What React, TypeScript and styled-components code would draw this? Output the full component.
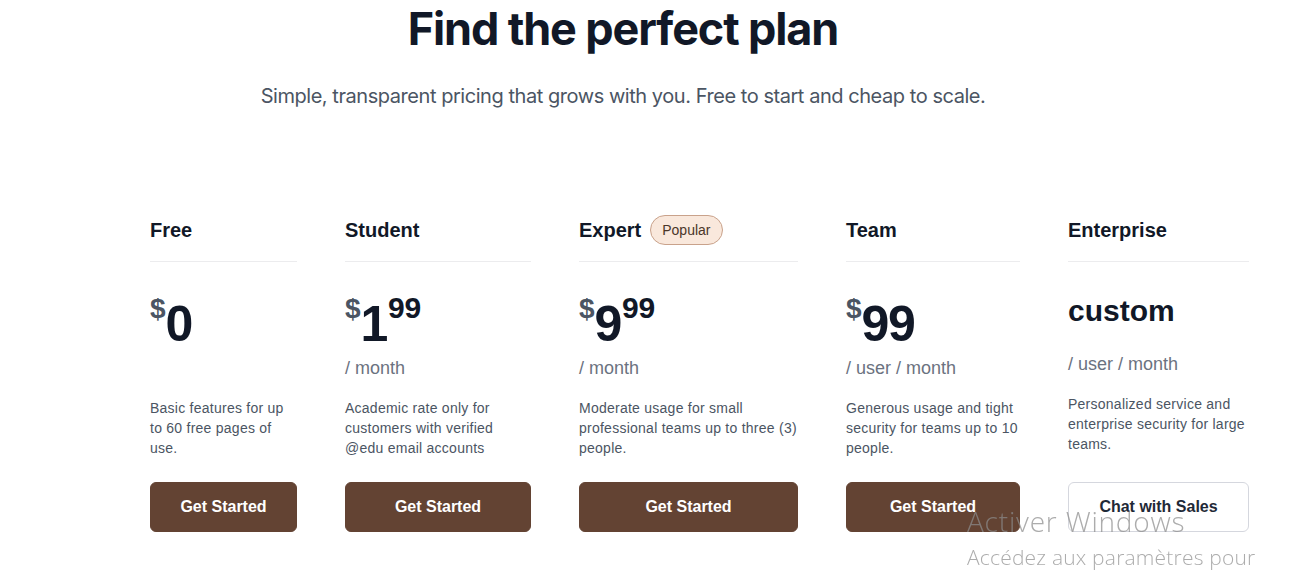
import React from 'react';
import styled, { createGlobalStyle } from 'styled-components';

const GlobalStyle = createGlobalStyle`
    * { box-sizing: border-box; }
    body {
        margin: 0;
        background: #ffffff;
        font-family: "Liberation Sans", Arial, sans-serif;
    }
`;

const Page = styled.main`
    width: 1294px;
    min-height: 573px;
    overflow: hidden;
`;

const Hero = styled.header`
    padding: 6px 48px 0 0;
    text-align: center;
    font-family: Inter, "Noto Sans", sans-serif;
`;

const Title = styled.h1`
    margin: 0;
    font-size: 45px;
    line-height: 1;
    font-weight: 700;
    letter-spacing: -0.025em;
    color: #111827;
`;

const Subtitle = styled.p`
    margin: 31px 0 0;
    font-size: 20px;
    line-height: 28px;
    font-weight: 400;
    letter-spacing: -0.45px;
    color: #4b5563;
`;

const PlanGrid = styled.section`
    display: grid;
    grid-template-columns: 147px 186px 219px 174px 181px;
    column-gap: 48px;
    margin-top: 105px;
    padding-left: 150px;
`;

const Column = styled.div`
    display: flex;
    flex-direction: column;
`;

const PlanHeader = styled.div`
    display: flex;
    align-items: center;
    gap: 9px;
    height: 30px;
    box-sizing: content-box;
    padding-bottom: 16px;
    border-bottom: 1px solid #ececee;
`;

const PlanName = styled.h3`
    margin: 0;
    font-size: 20px;
    line-height: 30px;
    font-weight: 700;
    color: #111827;
`;

const Badge = styled.span`
    display: inline-flex;
    align-items: center;
    height: 30px;
    padding: 0 11px;
    border-radius: 999px;
    border: 1px solid #c9a28b;
    background: #f9e8dc;
    color: #4a3629;
    font-size: 14px;
`;

const PriceRow = styled.div<{ $height: number }>`
    display: flex;
    align-items: flex-start;
    height: ${({ $height }) => $height}px;
    margin-top: 31px;
`;

const Currency = styled.span`
    margin-top: 2px;
    font-size: 28px;
    line-height: 1;
    font-weight: 700;
    color: #4b5563;
`;

const Amount = styled.span`
    margin-top: 6px;
    font-size: 50px;
    line-height: 1;
    font-weight: 700;
    letter-spacing: -1.5px;
    color: #111827;
`;

const Cents = styled.span`
    margin-left: 1px;
    font-size: 30px;
    line-height: 1;
    font-weight: 700;
    color: #111827;
`;

const Custom = styled.span`
    margin-top: 3px;
    font-size: 30px;
    line-height: 1;
    font-weight: 700;
    color: #111827;
`;

const Period = styled.div`
    margin-top: 5px;
    font-size: 18px;
    line-height: 28px;
    color: #6b7280;
    min-height: 28px;
`;

const Description = styled.p`
    margin: 16px 0 24px;
    font-size: 14px;
    line-height: 20px;
    letter-spacing: 0.25px;
    color: #4b5563;
`;

const ActionButton = styled.button<{ $outline?: boolean }>`
    margin-top: auto;
    height: 50px;
    width: 100%;
    border-radius: 6px;
    font-family: "Liberation Sans", Arial, sans-serif;
    font-size: 16px;
    font-weight: 700;
    cursor: pointer;
    border: 1px solid ${({ $outline }) => ($outline ? '#d5d7de' : '#634333')};
    background: ${({ $outline }) => ($outline ? '#ffffff' : '#634333')};
    color: ${({ $outline }) => ($outline ? '#1f2937' : '#ffffff')};
`;

const Watermark = styled.div`
    position: fixed;
    left: 967px;
    top: 504px;
    font-family: "Open Sans", "Noto Sans", sans-serif;
    color: rgba(140, 140, 140, 0.72);
    pointer-events: none;
`;

const WatermarkTitle = styled.div`
    font-size: 28px;
    line-height: 34px;
    font-weight: 300;
    letter-spacing: 0.8px;
`;

const WatermarkText = styled.div`
    margin-top: 6px;
    font-size: 21px;
    line-height: 26px;
    font-weight: 300;
    letter-spacing: 0.2px;
`;

type Plan = {
    name: string;
    popular?: boolean;
    amount?: string;
    cents?: string;
    custom?: string;
    period?: string;
    description: string;
    action: string;
    outline?: boolean;
};

const plans: Plan[] = [
    { name: 'Free', amount: '0', description: 'Basic features for up to 60 free pages of use.', action: 'Get Started' },
    { name: 'Student', amount: '1', cents: '99', period: '/ month', description: 'Academic rate only for customers with verified @edu email accounts', action: 'Get Started' },
    { name: 'Expert', popular: true, amount: '9', cents: '99', period: '/ month', description: 'Moderate usage for small professional teams up to three (3) people.', action: 'Get Started' },
    { name: 'Team', amount: '99', period: '/ user / month', description: 'Generous usage and tight security for teams up to 10 people.', action: 'Get Started' },
    { name: 'Enterprise', custom: 'custom', period: '/ user / month', description: 'Personalized service and enterprise security for large teams.', action: 'Chat with Sales', outline: true },
];

const PlanColumn = ({ plan }: { plan: Plan }) => (
    <Column>
        <PlanHeader>
            <PlanName>{plan.name}</PlanName>
            {plan.popular && <Badge>Popular</Badge>}
        </PlanHeader>
        {plan.custom ? (
            <PriceRow $height={52}>
                <Custom>{plan.custom}</Custom>
            </PriceRow>
        ) : (
            <PriceRow $height={56}>
                <Currency>$</Currency>
                <Amount>{plan.amount}</Amount>
                {plan.cents && <Cents>{plan.cents}</Cents>}
            </PriceRow>
        )}
        <Period>{plan.period}</Period>
        <Description>{plan.description}</Description>
        <ActionButton $outline={plan.outline}>{plan.action}</ActionButton>
    </Column>
);

export default function App() {
    return (
        <Page>
            <GlobalStyle />
            <Hero>
                <Title>Find the perfect plan</Title>
                <Subtitle>Simple, transparent pricing that grows with you. Free to start and cheap to scale.</Subtitle>
            </Hero>
            <PlanGrid>
                {plans.map((plan) => (
                    <PlanColumn key={plan.name} plan={plan} />
                ))}
            </PlanGrid>
            <Watermark>
                <WatermarkTitle>Activer Windows</WatermarkTitle>
                <WatermarkText>Accédez aux paramètres pour</WatermarkText>
            </Watermark>
        </Page>
    );
}
